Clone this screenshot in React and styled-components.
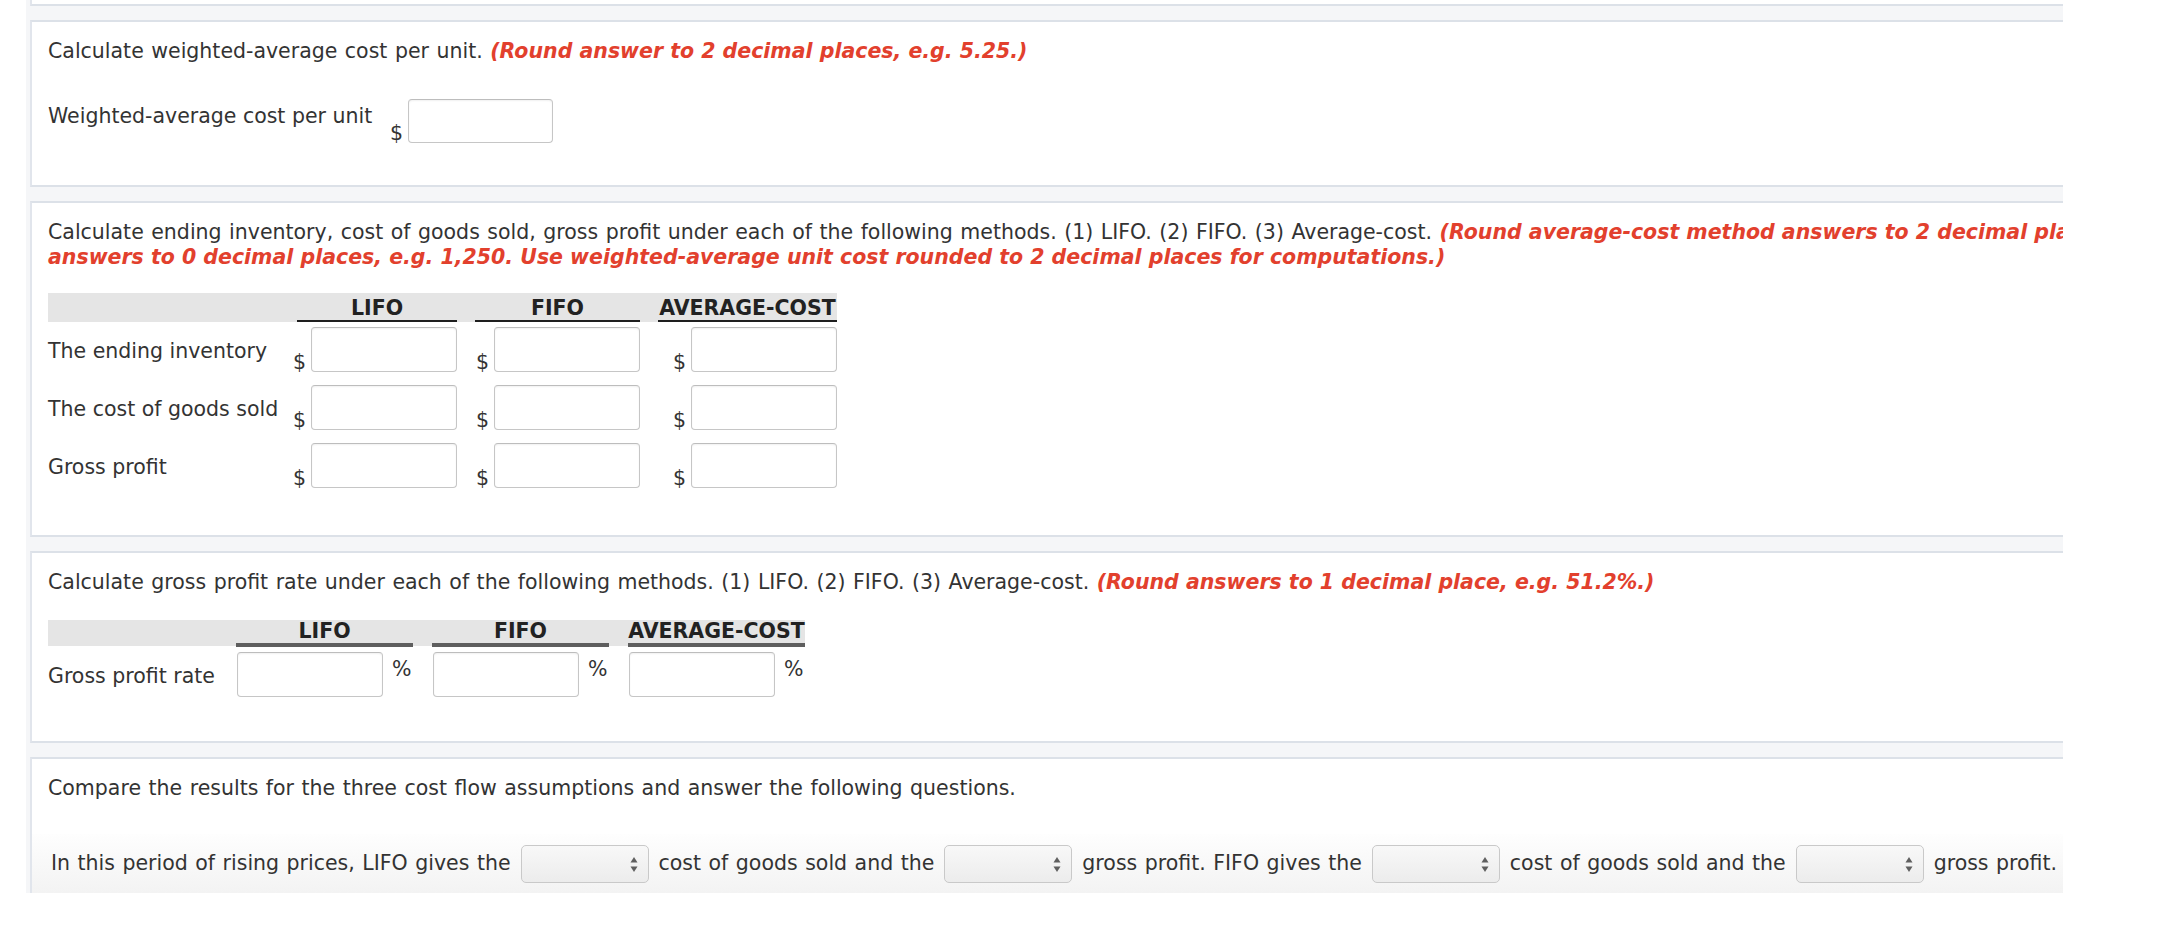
import React from "react";
import styled, { createGlobalStyle } from "styled-components";

const GlobalStyle = createGlobalStyle`
  body {
    margin: 0;
    background: #ffffff;
    font-family: "DejaVu Sans", Verdana, sans-serif;
    color: #333333;
  }
`;

const Page = styled.div`
  display: flex;
  flex-direction: column;
  gap: 14px;
  width: 2037px;
  margin-left: 26px;
  background: #f5f6f8;
  font-size: 20.5px;
  line-height: 25px;
`;

const Panel = styled.section`
  margin-left: 4px;
  background: #ffffff;
  border-left: 2px solid #e1e5ec;
  border-top: ${({ $stub }) => ($stub ? "none" : "2px solid #dce1e8")};
  border-bottom: ${({ $open }) => ($open ? "none" : "2px solid #dce1e8")};
  height: ${({ $stub }) => ($stub ? "4px" : "auto")};
  padding: ${({ $stub, $bottom }) => ($stub ? "0" : `16.5px 0 ${$bottom}px 16px`)};
  overflow: hidden;
`;

const Prompt = styled.p`
  margin: 0;
  word-spacing: 1px;
  white-space: ${({ $nowrap }) => ($nowrap ? "nowrap" : "normal")};
`;

const Hint = styled.span`
  color: #e2402d;
  font-weight: bold;
  font-style: italic;
  word-spacing: 0;
`;

const FieldRow = styled.div`
  display: flex;
  align-items: flex-start;
  margin-top: 35.5px;
`;

const FieldLabel = styled.span`
  padding-top: 5px;
  width: 342px;
`;

const Currency = styled.span`
  align-self: flex-end;
  margin-right: 5px;
  margin-bottom: -3px;
`;

const AnswerInput = styled.input`
  box-sizing: border-box;
  width: ${({ $w }) => $w || 146}px;
  height: ${({ $h }) => $h || 45}px;
  border: 1px solid #c6c6c6;
  border-top-color: #bdbdbd;
  border-radius: 4px;
  background: #ffffff;
  box-shadow: inset 0 1px 2px rgba(0, 0, 0, 0.06);
  outline: none;
  font: inherit;
  padding: 0 6px;
  flex: none;
`;

const Table = styled.div`
  display: grid;
  grid-template-columns: ${({ $cols }) => $cols};
  column-gap: ${({ $gap }) => $gap}px;
  width: max-content;
  margin-top: ${({ $top }) => $top}px;
`;

const HeaderBand = styled.div`
  grid-column: 1 / -1;
  display: grid;
  grid-template-columns: subgrid;
  background: #e5e5e5;
  height: ${({ $h }) => $h}px;
`;

const HeadCell = styled.div`
  align-self: stretch;
  display: flex;
  align-items: flex-end;
  justify-content: center;
  font-weight: bold;
  color: #222222;
  border-bottom: ${({ $line }) => $line};
  line-height: 22px;
  padding-bottom: 1px;
`;

const RowLabel = styled.div`
  align-self: center;
  white-space: nowrap;
  padding-top: 3px;
  margin-top: ${({ $top }) => $top}px;
`;

const MoneyCell = styled.div`
  display: flex;
  justify-content: flex-end;
  align-items: flex-end;
  margin-top: ${({ $top }) => $top}px;
`;

const PercentCell = styled.div`
  display: flex;
  align-items: flex-start;
  gap: 9px;
  margin-top: 6px;
  padding-left: 1px;
`;

const Unit = styled.span`
  padding-top: 5px;
`;

const Sentence = styled.div`
  display: flex;
  align-items: center;
  gap: 10px;
  margin: 33.5px 0 0 -16px;
  padding-left: 19px;
  height: 59px;
  background: linear-gradient(to bottom, #fefefe, #f3f3f3);
  white-space: nowrap;
  word-spacing: 1px;
`;

const Dropdown = styled.span`
  position: relative;
  box-sizing: border-box;
  display: inline-block;
  width: 128px;
  height: 38px;
  border: 1px solid #c9c9c9;
  border-radius: 5px;
  background: linear-gradient(to bottom, #f8f8f8, #ececec);
  flex: none;
`;

const Arrows = styled.svg`
  position: absolute;
  right: 10px;
  top: 11px;
`;

function Select() {
  return (
    <Dropdown>
      <Arrows width="8" height="15" viewBox="0 0 8 15">
        <path d="M4 0 L7.5 5.5 L0.5 5.5 Z" fill="#5f5f5f" />
        <path d="M4 15 L7.5 9.5 L0.5 9.5 Z" fill="#5f5f5f" />
      </Arrows>
    </Dropdown>
  );
}

const methods = ["LIFO", "FIFO", "AVERAGE-COST"];
const costRows = ["The ending inventory", "The cost of goods sold", "Gross profit"];

export default function App() {
  return (
    <>
      <GlobalStyle />
      <Page>
        <Panel $stub />

        <Panel $bottom={42}>
          <Prompt>
            Calculate weighted-average cost per unit.{" "}
            <Hint>(Round answer to 2 decimal places, e.g. 5.25.)</Hint>
          </Prompt>
          <FieldRow>
            <FieldLabel>Weighted-average cost per unit</FieldLabel>
            <Currency>$</Currency>
            <AnswerInput $w={145} $h={44} />
          </FieldRow>
        </Panel>

        <Panel $bottom={47}>
          <Prompt $nowrap>
            Calculate ending inventory, cost of goods sold, gross profit under each of the following
            methods. (1) LIFO. (2) FIFO. (3) Average-cost.{" "}
            <Hint>
              (Round average-cost method answers to 2 decimal places, e.g. 5.25 and all other
              <br />
              answers to 0 decimal places, e.g. 1,250. Use weighted-average unit cost rounded to 2
              decimal places for computations.)
            </Hint>
          </Prompt>
          <Table $cols="231px 160px 165px 179px" $gap={18} $top={23.5}>
            <HeaderBand $h={29}>
              <div />
              {methods.map((m) => (
                <HeadCell key={m} $line="2px solid #1e1e1e">
                  {m}
                </HeadCell>
              ))}
            </HeaderBand>
            {costRows.map((label, i) => (
              <React.Fragment key={label}>
                <RowLabel $top={i === 0 ? 5 : 13}>{label}</RowLabel>
                {methods.map((m) => (
                  <MoneyCell key={m} $top={i === 0 ? 5 : 13}>
                    <Currency>$</Currency>
                    <AnswerInput />
                  </MoneyCell>
                ))}
              </React.Fragment>
            ))}
          </Table>
        </Panel>

        <Panel $bottom={44}>
          <Prompt>
            Calculate gross profit rate under each of the following methods. (1) LIFO. (2) FIFO. (3)
            Average-cost. <Hint>(Round answers to 1 decimal place, e.g. 51.2%.)</Hint>
          </Prompt>
          <Table $cols="169px 177px 177px 177px" $gap={19} $top={25.5}>
            <HeaderBand $h={26}>
              <div />
              {methods.map((m) => (
                <HeadCell key={m} $line="4px solid #5e5e5e">
                  {m}
                </HeadCell>
              ))}
            </HeaderBand>
            <RowLabel $top={6}>Gross profit rate</RowLabel>
            {methods.map((m) => (
              <PercentCell key={m}>
                <AnswerInput />
                <Unit>%</Unit>
              </PercentCell>
            ))}
          </Table>
        </Panel>

        <Panel $bottom={0} $open>
          <Prompt>
            Compare the results for the three cost flow assumptions and answer the following
            questions.
          </Prompt>
          <Sentence>
            <span>In this period of rising prices, LIFO gives the</span>
            <Select />
            <span>cost of goods sold and the</span>
            <Select />
            <span>gross profit. FIFO gives the</span>
            <Select />
            <span>cost of goods sold and the</span>
            <Select />
            <span>gross profit.</span>
          </Sentence>
        </Panel>
      </Page>
    </>
  );
}
